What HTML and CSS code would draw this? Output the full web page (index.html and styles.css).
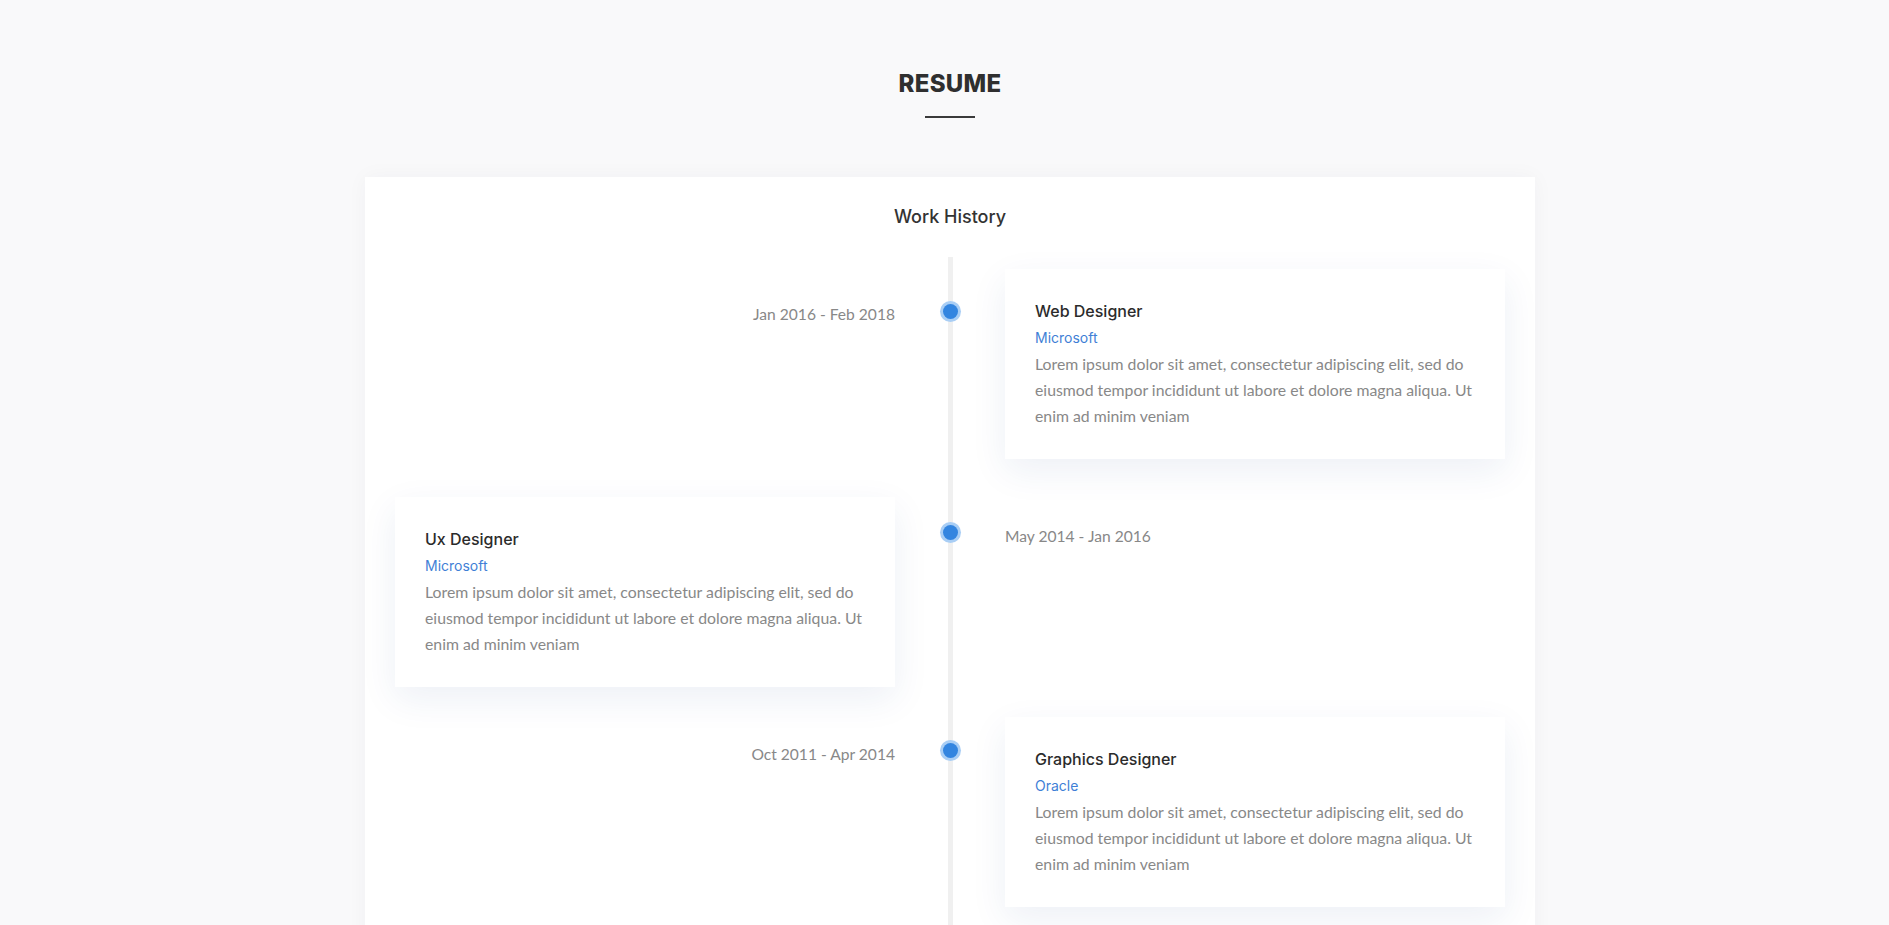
FILE: index.html
```html
<!DOCTYPE html>
<html lang="en">
<head>
<meta charset="utf-8">
<title>Resume</title>
<link rel="stylesheet" href="styles.css">
</head>
<body>
<div class="page">
  <section class="resume">
    <h2 class="section-title">RESUME</h2>
    <div class="title-rule"></div>
    <div class="panel">
      <h3 class="panel-title">Work History</h3>
      <div class="timeline">
        <div class="item">
          <div class="date date-left">Jan 2016 - Feb 2018</div>
          <div class="dot"></div>
          <div class="card">
            <h4 class="job">Web Designer</h4>
            <div class="company">Microsoft</div>
            <p class="desc">Lorem ipsum dolor sit amet, consectetur adipiscing elit, sed do eiusmod tempor incididunt ut labore et dolore magna aliqua. Ut enim ad minim veniam</p>
          </div>
        </div>
        <div class="item">
          <div class="card">
            <h4 class="job">Ux Designer</h4>
            <div class="company">Microsoft</div>
            <p class="desc">Lorem ipsum dolor sit amet, consectetur adipiscing elit, sed do eiusmod tempor incididunt ut labore et dolore magna aliqua. Ut enim ad minim veniam</p>
          </div>
          <div class="dot"></div>
          <div class="date date-right">May 2014 - Jan 2016</div>
        </div>
        <div class="item">
          <div class="date date-left">Oct 2011 - Apr 2014</div>
          <div class="dot"></div>
          <div class="card">
            <h4 class="job">Graphics Designer</h4>
            <div class="company">Oracle</div>
            <p class="desc">Lorem ipsum dolor sit amet, consectetur adipiscing elit, sed do eiusmod tempor incididunt ut labore et dolore magna aliqua. Ut enim ad minim veniam</p>
          </div>
        </div>
      </div>
    </div>
  </section>
</div>
</body>
</html>
```

FILE: styles.css
```css
* { box-sizing: border-box; }

html, body {
  margin: 0;
  padding: 0;
  background: #f9f9fa;
}

body {
  font-family: "Lato", "Open Sans", sans-serif;
  color: #333;
}

.page {
  padding-left: 11px;
}

.resume {
  width: 1170px;
  margin: 0 auto;
  padding-top: 68px;
  display: flex;
  flex-direction: column;
  align-items: center;
}

.section-title {
  margin: 0;
  font-family: "Inter", "Roboto", sans-serif;
  font-weight: 800;
  font-size: 24px;
  line-height: 31px;
  letter-spacing: 0.3px;
  color: #2f2f2f;
}

.title-rule {
  width: 50px;
  height: 2px;
  background: #3a3a3a;
  margin-top: 17px;
}

.panel {
  align-self: stretch;
  margin-top: 59px;
  background: #fff;
  padding: 29px 30px 40px;
  box-shadow: 0 0 20px rgba(40, 50, 80, 0.04);
}

.panel-title {
  margin: 0;
  text-align: center;
  font-family: "Inter", "Roboto", sans-serif;
  font-weight: 500;
  font-size: 18px;
  line-height: 22px;
  color: #333;
}

.timeline {
  margin-top: 29px;
  padding: 12px 0 60px;
  display: flex;
  flex-direction: column;
  background: linear-gradient(#f0f0f0, #f0f0f0) center top / 5px 100% no-repeat;
}

.item {
  display: grid;
  grid-template-columns: 500px 1fr 500px;
  align-items: start;
}

.item:nth-child(2) { margin-top: 38px; }
.item:nth-child(3) { margin-top: 29.5px; }

.dot {
  justify-self: center;
  width: 15px;
  height: 15px;
  margin-top: 34.5px;
  border-radius: 50%;
  background: #3385e0;
  box-shadow: 0 0 0 3px #a9cef5;
}

.item:nth-child(2) .dot { margin-top: 28px; }
.item:nth-child(3) .dot { margin-top: 26px; }

.date {
  margin-top: 33px;
  font-size: 15.6px;
  line-height: 24px;
  color: #888;
}

.item:nth-child(2) .date { margin-top: 27px; }
.item:nth-child(3) .date { margin-top: 25px; }

.date-left { text-align: right; }
.date-right { text-align: left; }

.card {
  background: #fff;
  padding: 30px 30px 30px;
  box-shadow: 0 12px 34px rgba(30, 60, 140, 0.08);
}

.job {
  margin: 0;
  font-family: "Inter", "Roboto", sans-serif;
  font-weight: 500;
  font-size: 16px;
  line-height: 24px;
  color: #2b2b2b;
}

.company {
  margin-top: 3px;
  font-family: "Inter", "Roboto", sans-serif;
  font-size: 14px;
  line-height: 24px;
  color: #3f7fd6;
}

.desc {
  margin: 1px 0 0;
  font-size: 15.8px;
  line-height: 26px;
  color: #888;
}
```
